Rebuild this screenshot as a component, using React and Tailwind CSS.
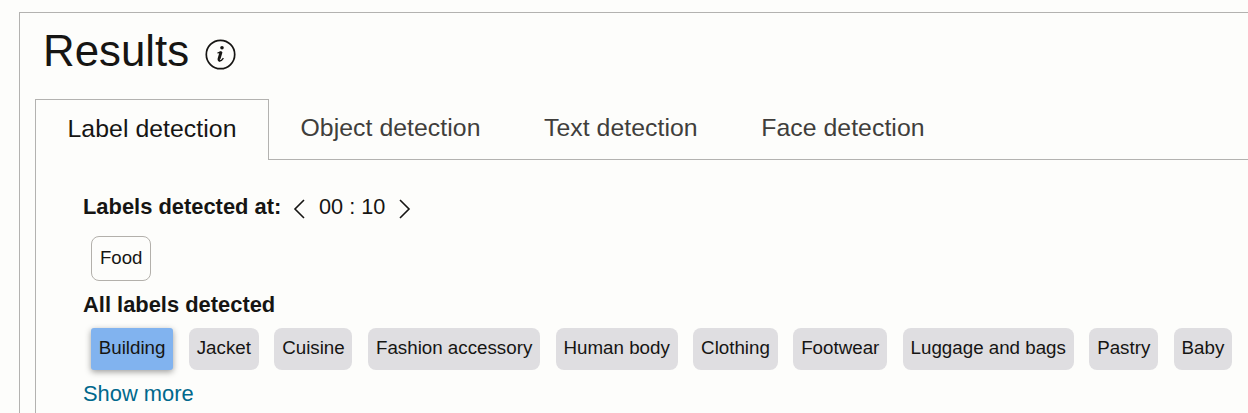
import { useState } from 'react'

const TABS = ['Label detection', 'Object detection', 'Text detection', 'Face detection']

const LABELS = [
  'Building',
  'Jacket',
  'Cuisine',
  'Fashion accessory',
  'Human body',
  'Clothing',
  'Footwear',
  'Luggage and bags',
  'Pastry',
  'Baby',
]

function InfoIcon() {
  return (
    <svg width="31" height="31" viewBox="0 0 31 31" fill="none" stroke="#161513">
      <circle cx="15.5" cy="15.5" r="14.2" strokeWidth="1.7" />
      <circle cx="17" cy="8.8" r="1.8" fill="#161513" stroke="none" />
      <path d="M12.4 14c1.4-.2 2.8-.7 4.2-1.4" strokeWidth="1.2" />
      <path d="M16.1 12.8l-2 6.8c-.3 1.2.1 1.8 1 1.6" strokeWidth="2.9" />
      <path d="M14.4 21.8c1.7.2 3-.9 4-2.6" strokeWidth="1.3" />
    </svg>
  )
}

function Chevron({ d }) {
  return (
    <svg width="12" height="20" viewBox="0 0 12 20" fill="none" stroke="#161513" strokeWidth="1.6">
      <path d={d} />
    </svg>
  )
}

function LabelChip({ label, selected, onClick }) {
  return (
    <button
      onClick={onClick}
      className={`h-[42px] shrink-0 px-[7.75px] pb-[3px] text-[18.75px] whitespace-nowrap ${
        selected
          ? 'rounded-[3px] bg-[#81b3ef] shadow-[0_2px_6px_rgba(0,0,0,0.38)]'
          : 'rounded-[8px] bg-[#dfdee1]'
      }`}
    >
      {label}
    </button>
  )
}

export default function App() {
  const [activeTab, setActiveTab] = useState(TABS[0])
  const [selected, setSelected] = useState('Building')

  return (
    <div className="h-[413px] overflow-hidden bg-[#fdfdfb] pt-3 pl-[19px] font-['Liberation_Sans',Arial,sans-serif] text-[#161513]">
      <div className="h-[420px] border-t border-l border-[#b3b2b0] pl-[15px]">
        {/* Header */}
        <div className="flex h-[86px] items-start pl-2">
          <h1 className="mt-[13px] w-[145px] text-[43.8px] leading-[50px] whitespace-nowrap">Results</h1>
          <div className="mt-[26px] ml-[17px]">
            <InfoIcon />
          </div>
        </div>

        {/* Tabs */}
        <div className="flex h-[61px] text-[24.8px] leading-[30px] tracking-[0.05px]">
          {TABS.map((tab) => (
            <button
              key={tab}
              onClick={() => setActiveTab(tab)}
              className={`shrink-0 whitespace-nowrap ${
                tab === activeTab
                  ? 'w-[234px] border border-b-0 border-[#b3b2b0] pb-[2px]'
                  : 'border-b border-[#b3b2b0] pr-8 pb-[2px] pl-[31.5px] text-[#403e3b]'
              }`}
            >
              {tab}
            </button>
          ))}
          <div className="flex-1 border-b border-[#b3b2b0]" />
        </div>

        {/* Panel */}
        <div className="h-[280px] border-l border-[#b3b2b0] pt-[33px] pl-[47px] text-[21.9px] leading-[28px]">
          <div className="flex h-7 items-center">
            <span className="w-[198px] font-bold whitespace-nowrap">Labels detected at:</span>
            <button className="mt-[3px] ml-3">
              <Chevron d="M11 1L2 10L11 19" />
            </button>
            <span className="ml-[14px] w-[67px] text-[21.7px] whitespace-nowrap">00 : 10</span>
            <button className="mt-[3px] ml-[13px]">
              <Chevron d="M1 1L10 10L1 19" />
            </button>
          </div>
          <div className="mt-[15px] flex pl-2">
            <div className="flex h-[45px] items-center rounded-[8px] border border-[#b3b0ab] px-2 pb-[2px] text-[18.6px]">
              Food
            </div>
          </div>
          <h2 className="mt-[10px] font-bold">All labels detected</h2>
          <div className="mt-[9px] flex gap-[15.75px] pl-2">
            {LABELS.map((label) => (
              <LabelChip
                key={label}
                label={label}
                selected={label === selected}
                onClick={() => setSelected(label)}
              />
            ))}
          </div>
          <button className="mt-[10px] block text-[#00688c]">Show more</button>
        </div>
      </div>
    </div>
  )
}
